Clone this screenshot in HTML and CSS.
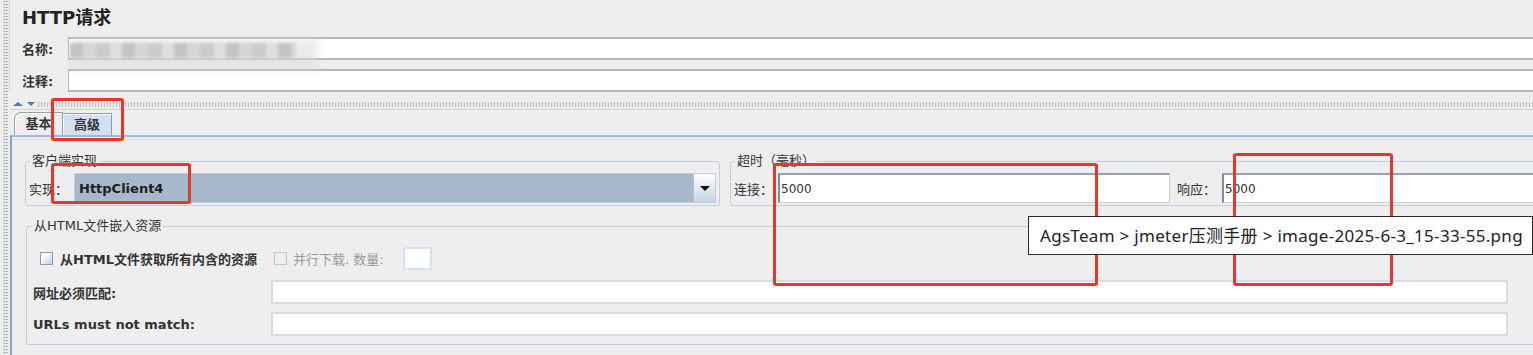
FILE: index.html
```html
<!DOCTYPE html>
<html lang="zh-CN">
<head>
  <meta charset="UTF-8" />
  <title>HTTP请求</title>
  <link rel="stylesheet" href="styles.css">
</head>
<body>

<div class="window">
  <div class="vsplit"></div>
  <div class="main">
    <div class="header">
      <div class="title">HTTP请求</div>
      <div class="row">
        <label class="lbl">名称:</label>
        <input class="top-field" type="text" value="" />
      </div>
      <div class="row">
        <label class="lbl">注释:</label>
        <input class="top-field" type="text" value="" />
      </div>
    </div>

    <div class="hsplit">
      <span class="arrow up"></span>
      <span class="arrow down"></span>
      <div class="dots"></div>
    </div>

    <div class="tabs">
      <div class="tab">基本</div>
      <div class="tab active">高级</div>
    </div>

    <div class="panel">
      <div class="panel-inner">
        <div class="group-row">
          <fieldset class="group client">
            <legend>客户端实现</legend>
            <div class="inline">
              <span class="lbl-impl">实现：</span>
              <div class="combo">
                <span class="combo-text">HttpClient4</span>
                <div class="combo-btn"><span class="tri"></span></div>
              </div>
            </div>
          </fieldset>
          <fieldset class="group timeout">
            <legend>超时（毫秒）</legend>
            <div class="inline">
              <span class="lbl-conn">连接：</span>
              <input class="bevel conn" type="text" value="5000" />
              <span class="lbl-resp">响应：</span>
              <input class="bevel resp" type="text" value="5000" />
            </div>
          </fieldset>
        </div>

        <fieldset class="group embed">
          <legend>从HTML文件嵌入资源</legend>
          <div class="check-row">
            <span class="check"></span>
            <span class="check-label">从HTML文件获取所有内含的资源</span>
            <span class="check disabled"></span>
            <span class="check-label off">并行下载. 数量:</span>
            <input class="small-field" type="text" value="" />
          </div>
          <div class="url-row">
            <span class="url-label">网址必须匹配:</span>
            <input class="light-field" type="text" value="" />
          </div>
          <div class="url-row">
            <span class="url-label">URLs must not match:</span>
            <input class="light-field" type="text" value="" />
          </div>
        </fieldset>
      </div>
    </div>
  </div>
</div>

<!-- blurred name value -->
<div class="blur-halo"></div>
<div class="blur-blocks"></div>

<!-- red annotation boxes -->
<div class="mark m1"></div>
<div class="mark m2"></div>
<div class="mark m3"></div>
<div class="mark m4"></div>

<div class="tooltip">AgsTeam &gt; jmeter压测手册 &gt; image-2025-6-3_15-33-55.png</div>

</body>
</html>
```

FILE: styles.css
```css
body {
  margin: 0; width: 1533px; height: 355px; overflow: hidden; position: relative;
  background: #eeeeee; color: #333;
  font-family: "DejaVu Sans", "Noto Sans CJK SC", sans-serif; font-size: 13px;
}
input { font-family: inherit; margin: 0; outline: none; box-sizing: border-box; background: #fff; }

.window { display: flex; width: 1580px; height: 355px; }
.vsplit { width: 10px; flex: none; position: relative; }
.vsplit::before {
  content: ""; display: block; margin-left: 3px; width: 5px; height: 100%;
  background-image: radial-gradient(circle, #a9a9a9 0.7px, transparent 1.1px);
  background-size: 2.5px 3px;
}
.main { flex: 1; display: flex; flex-direction: column; }

/* header */
.header { padding: 8px 0 0 12px; border-left: 1px solid #dadada; margin-left: -1px; }
.title { font-size: 18px; font-weight: bold; line-height: 20px; color: #222; }
.row { display: flex; align-items: center; height: 23px; margin-top: 9px; }
.lbl { width: 46px; flex: none; font-weight: bold; }
.top-field { flex: 1; height: 23px; border: 2px solid #aeb6c2; border-left-width: 1px; border-right: none; }

/* splitter */
.hsplit { height: 18px; box-sizing: border-box; padding: 10px 0 0 3px; display: flex; align-items: flex-start; border-bottom: 1px solid #d0d0d0; }
.arrow { width: 0; height: 0; flex: none; }
.arrow.up { border-left: 5px solid transparent; border-right: 5px solid transparent; border-bottom: 4px solid #4f74b0; margin-right: 4px; }
.arrow.down { border-left: 4px solid transparent; border-right: 4px solid transparent; border-top: 4px solid #4f74b0; }
.dots {
  flex: 1; height: 5px; margin-left: 2px;
  background-image: radial-gradient(circle, #b3b3b3 0.7px, transparent 1.1px);
  background-size: 3px 2.5px;
}

/* tabs */
.tabs { height: 25px; display: flex; align-items: flex-end; padding-left: 4px; }
.tab {
  box-sizing: border-box; height: 23px; width: 49px; text-align: center; line-height: 21px;
  border: 1px solid #9c9c9c; border-bottom: none; border-top-left-radius: 7px;
  box-shadow: inset 1px 1px 0 #fff; font-weight: bold; color: #333;
}
.tab.active { width: 50px; height: 22px; background: #d3e0f4; border-color: #8f9bb0; border-top-left-radius: 2px; margin-left: -1px; }

/* panel */
.panel { flex: 1; border-top: 2px solid #a3b7dc; border-left: 2px solid #8ba3cf; }
.panel-inner { border-top: 1px solid #d4dcea; margin-top: 2px; padding: 14px 0 0 13px; }
.group-row { display: flex; gap: 10px; }

.group { margin: 0; padding: 5px 3px 2px 3px; border: 1px solid #c3cfe0; border-radius: 3px; min-width: 0; }
.group legend { padding: 0 2px; margin-left: 1px; line-height: 14px; font-size: 13px; color: #333; }
.client { width: 695px; box-sizing: border-box; flex: none; }
.timeout { flex: 1; }
.inline { display: flex; align-items: center; height: 30px; }

.lbl-impl { width: 45px; flex: none; }
.combo {
  flex: 1; height: 30px; box-sizing: border-box; display: flex; align-items: center;
  background: #a7b8cc; border: 1px solid #c2ccda;
}
.combo-text { flex: 1; padding-left: 4px; font-weight: bold; color: #1e1e1e; }
.combo-btn {
  width: 21px; height: 28px; display: flex; align-items: center; justify-content: center;
  background: linear-gradient(#ffffff, #c5d3e6); border-left: 1px solid #b3c0d2;
}
.tri { width: 0; height: 0; border-left: 5px solid transparent; border-right: 5px solid transparent; border-top: 5px solid #111; }

.lbl-conn { width: 44px; flex: none; }
.lbl-resp { width: 45px; flex: none; margin-left: 7px; }
.bevel {
  height: 30px; font-size: 12px; color: #333; padding: 0 1px;
  border: 1px solid #c9cfd8; border-top: 2px solid #9aa2ad; border-left: 2px solid #858c96;
}
.bevel.conn { width: 392px; flex: none; }
.bevel.resp { flex: 1; }

/* embedded resources */
.embed { margin: 13px 35px 0 1px; padding: 14px 3px 8px 3px; }
.embed legend { margin-left: 2px; }
.check-row { display: flex; align-items: center; height: 23px; }
.check {
  width: 13px; height: 13px; flex: none; box-sizing: border-box; margin-left: 10px;
  border: 1px solid #8a9ab0; background: linear-gradient(135deg, #ffffff 20%, #c3d0e2);
}
.check.disabled { margin-left: 17px; border-color: #c2c7cf; background: #efefef; }
.check-label { margin-left: 7px; font-weight: bold; }
.check-label.off { margin-left: 6px; font-weight: normal; color: #9a9a9a; }
.small-field { width: 29px; height: 23px; margin-left: 19px; border: 2px solid #d7e2f1; }

.url-row { display: flex; align-items: center; height: 24px; margin-top: 8px; padding-left: 3px; }
.check-row + .url-row { margin-top: 10px; }
.url-label { width: 238px; flex: none; font-weight: bold; }
.light-field { flex: 1; height: 24px; margin-right: 33px; border: 2px solid #d3dcea; }

/* blurred value in the name box */
.blur-halo {
  position: absolute; left: 70px; top: 38px; width: 248px; height: 32px;
  background: #dcdcdc; opacity: 0.55; filter: blur(4px);
}
.blur-blocks {
  position: absolute; left: 70px; top: 43px; width: 226px; height: 15px;
  background: repeating-linear-gradient(90deg, #c3c3c3 0 13px, #d6d6d6 13px 26px, #cbcbcb 26px 40px, #dedede 40px 52px);
  filter: blur(1.5px);
}

/* annotations */
.mark { position: absolute; border: 3px solid #e6382a; border-radius: 3px; box-sizing: border-box; }
.m1 { left: 51px; top: 98px; width: 73px; height: 43px; }
.m2 { left: 51px; top: 163px; width: 140px; height: 41px; }
.m3 { left: 773px; top: 163px; width: 325px; height: 123px; }
.m4 { left: 1233px; top: 153px; width: 160px; height: 133px; }

.tooltip {
  position: absolute; left: 1028px; top: 216px; width: 505px; height: 39px; box-sizing: border-box;
  background: #fff; border: 1px solid #2b2b2b; padding-left: 11px;
  font-family: "Noto Sans", "Noto Sans CJK SC", sans-serif; font-size: 17px; line-height: 37px;
  color: #222; letter-spacing: 0.3px; white-space: nowrap;
}
```
